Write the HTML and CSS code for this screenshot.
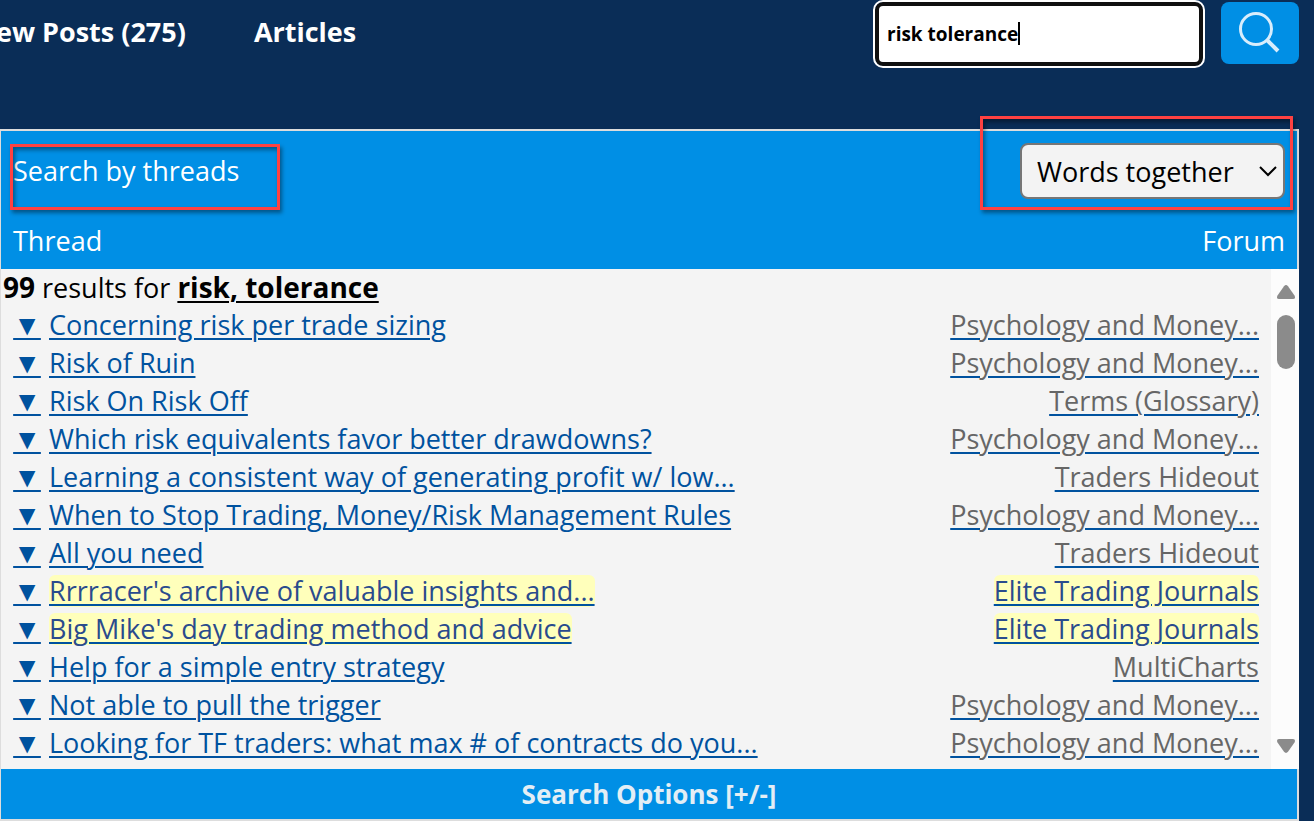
FILE: index.html
```
<!DOCTYPE html>
<html lang="en">

    <head>
        <meta charset="UTF-8">
        <meta name="viewport" content="width=device-width, initial-scale=1.0">
        <title>Search</title>

        <link rel="stylesheet" href="styles.css">
    </head>

    <body>
        <header class="header">
            <nav class="nav">
                <a href="#new">New Posts (275)</a>
                <a href="#articles">Articles</a>
            </nav>
            <form class="search">
                <div class="search__field">
                    <input type="text" class="search__input" value="risk tolerance" aria-label="Search">
                    <span class="search__caret"></span>
                </div>
                <button type="button" class="search__button" aria-label="Search">
                    <svg width="42" height="42" viewBox="0 0 42 42" fill="none" stroke="#d8edfc">
                        <circle cx="17" cy="17" r="15.5" stroke-width="3" />
                        <path d="M28 28L39 39" stroke-width="4" />
                    </svg>
                </button>
            </form>
        </header>

        <main class="panel">
            <div class="panel__head">
                <div class="panel__row">
                    <h1 class="panel__title">Search by threads</h1>
                    <div class="select">
                        <select class="select__input" aria-label="Match mode">
                            <option>Words together</option>
                            <option>Any words</option>
                        </select>
                        <svg class="select__arrow" width="18" height="12" viewBox="0 0 18 12" fill="none" stroke="#000" stroke-width="2">
                            <path d="M1 2L9 10L17 2" />
                        </svg>
                    </div>
                    <span class="mark mark--left"></span>
                    <span class="mark mark--right"></span>
                </div>
                <div class="panel__row panel__row--labels">
                    <span>Thread</span>
                    <span>Forum</span>
                </div>
            </div>

            <div class="results">
                <div class="results__body">
                    <p class="results__count"><b>99</b> results for <b><u>risk, tolerance</u></b></p>
                    <table class="threads">
                        <tr>
                            <td><a class="toggle" href="#">▼</a><a href="#">Concerning risk per trade sizing</a></td>
                            <td><a href="#"><span>Psychology and Money...</span></a></td>
                        </tr>
                        <tr>
                            <td><a class="toggle" href="#">▼</a><a href="#">Risk of Ruin</a></td>
                            <td><a href="#"><span>Psychology and Money...</span></a></td>
                        </tr>
                        <tr>
                            <td><a class="toggle" href="#">▼</a><a href="#">Risk On Risk Off</a></td>
                            <td><a href="#"><span>Terms (Glossary)</span></a></td>
                        </tr>
                        <tr>
                            <td><a class="toggle" href="#">▼</a><a href="#">Which risk equivalents favor better drawdowns?</a></td>
                            <td><a href="#"><span>Psychology and Money...</span></a></td>
                        </tr>
                        <tr>
                            <td><a class="toggle" href="#">▼</a><a href="#">Learning a consistent way of generating profit w/ low...</a></td>
                            <td><a href="#"><span>Traders Hideout</span></a></td>
                        </tr>
                        <tr>
                            <td><a class="toggle" href="#">▼</a><a href="#">When to Stop Trading, Money/Risk Management Rules</a></td>
                            <td><a href="#"><span>Psychology and Money...</span></a></td>
                        </tr>
                        <tr>
                            <td><a class="toggle" href="#">▼</a><a href="#">All you need</a></td>
                            <td><a href="#"><span>Traders Hideout</span></a></td>
                        </tr>
                        <tr>
                            <td><a class="toggle" href="#">▼</a><a href="#"><span class="elite">Rrrracer's archive of valuable insights and...</span></a></td>
                            <td><a href="#"><span class="elite">Elite Trading Journals</span></a></td>
                        </tr>
                        <tr>
                            <td><a class="toggle" href="#">▼</a><a href="#"><span class="elite">Big Mike's day trading method and advice</span></a></td>
                            <td><a href="#"><span class="elite">Elite Trading Journals</span></a></td>
                        </tr>
                        <tr>
                            <td><a class="toggle" href="#">▼</a><a href="#">Help for a simple entry strategy</a></td>
                            <td><a href="#"><span>MultiCharts</span></a></td>
                        </tr>
                        <tr>
                            <td><a class="toggle" href="#">▼</a><a href="#">Not able to pull the trigger</a></td>
                            <td><a href="#"><span>Psychology and Money...</span></a></td>
                        </tr>
                        <tr>
                            <td><a class="toggle" href="#">▼</a><a href="#">Looking for TF traders: what max # of contracts do you...</a></td>
                            <td><a href="#"><span>Psychology and Money...</span></a></td>
                        </tr>
                    </table>
                </div>
                <div class="scrollbar">
                    <svg width="18" height="14" viewBox="0 0 18 14" fill="#8b8b8b">
                        <path d="M7 1.2Q9 -1 11 1.2L17.5 10.5Q19 14 16 14H2Q-1 14 .5 10.5Z" />
                    </svg>
                    <span class="scrollbar__thumb"></span>
                    <svg class="scrollbar__down" width="18" height="14" viewBox="0 0 18 14" fill="#8b8b8b">
                        <path d="M7 12.8Q9 15 11 12.8L17.5 3.5Q19 0 16 0H2Q-1 0 .5 3.5Z" />
                    </svg>
                </div>
            </div>

            <button type="button" class="options">Search Options [+/-]</button>
        </main>
    </body>

</html>
```
FILE: styles.css
```
* {
    margin: 0;
    padding: 0;
    box-sizing: border-box;
}

body {
    background-color: #0a2d57;
    color: #000;
    font-family: "Open Sans", "Noto Sans", sans-serif;
    font-size: 27px;
    line-height: 38px;
    overflow: hidden;
}

a {
    color: #00529f;
    text-decoration-thickness: 2px;
    text-underline-offset: 3px;
}

b {
    font-weight: 700;
    line-height: 1;
}

.header {
    display: flex;
    justify-content: space-between;
    align-items: flex-start;
    height: 129px;
    padding: 2px 15px 0 0;
}

.nav {
    display: flex;
    gap: 68px;
    margin-left: -26px;
    padding-top: 11px;
    white-space: nowrap;
}

.nav a {
    color: #fff;
    font-weight: 700;
    text-decoration: none;
}

.search {
    display: flex;
    gap: 18px;
}

.search__field {
    position: relative;
}

.search__input {
    display: block;
    width: 328px;
    height: 64px;
    padding: 0 8px;
    border: 4px solid #101010;
    border-radius: 8px;
    outline: 2px solid #fff;
    background-color: #fff;
    font-family: inherit;
    font-size: 19px;
    font-weight: 700;
}

.search__caret {
    position: absolute;
    top: 20px;
    left: 143px;
    width: 2px;
    height: 23px;
    background-color: #000;
}

.search__button {
    display: flex;
    align-items: center;
    justify-content: center;
    width: 78px;
    height: 62px;
    border: 0;
    border-radius: 8px;
    background-color: #008fe5;
}

.panel {
    margin-right: 15px;
    border: 2px solid #ddd;
    border-left-width: 1px;
    background-color: #008fe5;
}

.panel__head {
    padding: 12px 12px 0;
    color: #fff;
}

.panel__row {
    position: relative;
    display: flex;
    align-items: center;
    justify-content: space-between;
}

.panel__row--labels {
    height: 70px;
    padding-top: 14px;
}

.panel__title {
    font-size: 27px;
    font-weight: 400;
}

.select {
    position: relative;
}

.select__input {
    display: block;
    width: 265px;
    height: 56px;
    padding: 0 15px;
    border: 2px solid #767676;
    border-radius: 8px;
    background-color: #f3f3f3;
    color: #000;
    font-family: inherit;
    font-size: 27px;
    appearance: none;
}

.select__arrow {
    position: absolute;
    top: 22px;
    right: 8px;
    pointer-events: none;
}

.mark {
    position: absolute;
    border: 3px solid #ff4141;
    box-shadow: 2px 3px 4px rgba(0, 0, 0, 0.4), inset 2px 3px 4px rgba(0, 0, 0, 0.4);
    pointer-events: none;
}

.mark--left {
    top: 1px;
    left: -3px;
    width: 270px;
    height: 66px;
}

.mark--right {
    top: -27px;
    right: -8px;
    width: 313px;
    height: 94px;
}

.results {
    display: flex;
    margin-right: -2px;
}

.results__body {
    flex: 1;
    padding-bottom: 6px;
    background-color: #f4f4f4;
}

.results__count {
    padding-left: 2px;
}

.results__count b {
    font-size: 28px;
}

.results__count u {
    text-decoration-thickness: 2px;
    text-underline-offset: 3px;
}

.threads {
    width: 100%;
    border-collapse: collapse;
}

.threads td {
    height: 38px;
    padding: 0 0 2px 12px;
    line-height: 36px;
    white-space: nowrap;
}

.threads td:last-child {
    padding-right: 12px;
    text-align: right;
}

.threads td:last-child span {
    color: #666;
}

.threads .elite,
.threads td:last-child .elite {
    display: inline-block;
    border-radius: 6px;
    background-color: #ffffbb;
    color: #2a4b8d;
    line-height: 32px;
    text-decoration: underline;
    text-decoration-color: #00529f;
    text-decoration-thickness: 2px;
    text-underline-offset: 3px;
}

.threads .toggle {
    display: inline-block;
    width: 28px;
    margin-right: 8px;
    font-size: 28px;
    line-height: 1;
    text-align: center;
}

.scrollbar {
    display: flex;
    flex-direction: column;
    align-items: center;
    width: 28px;
    padding: 16px 0 16px 2px;
    background-color: #fcfcfc;
}

.scrollbar__thumb {
    width: 18px;
    height: 54px;
    margin-top: 16px;
    border-radius: 9px;
    background-color: #8b8b8b;
}

.scrollbar__down {
    margin-top: auto;
}

.options {
    display: block;
    width: 100%;
    height: 50px;
    border: 0;
    background-color: #008fe5;
    color: #e3eef5;
    font-family: inherit;
    font-size: 26px;
    font-weight: 700;
}
```
